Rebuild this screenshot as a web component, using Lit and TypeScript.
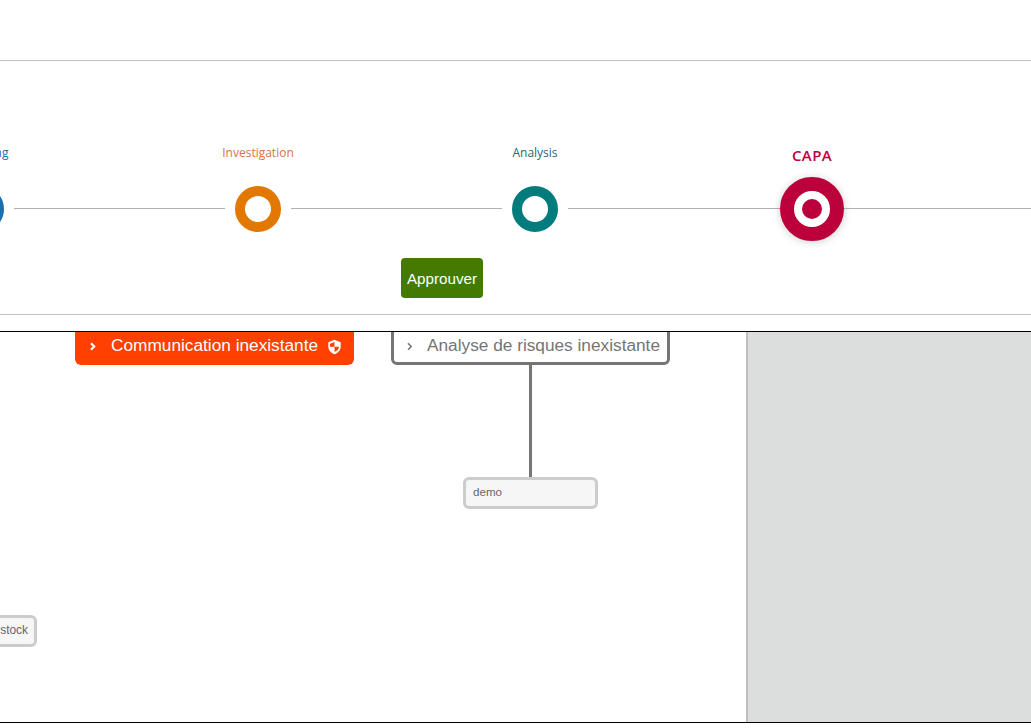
import { LitElement, html, css } from "lit";
import { customElement } from "lit/decorators.js";

@customElement("app-root")
export class AppRoot extends LitElement {
  static styles = css`
    :host { display: block; width: 1031px; height: 728px; overflow: hidden; background: #fff; font-family: "Liberation Sans", Arial, sans-serif; }
    .top { height: 60px; border-bottom: 1px solid #bdbdbd; }
    .process { height: 253px; border-bottom: 1px solid #c4c4c4; display: flex; flex-direction: column; }
    .labels { display: flex; margin: 76px 0 0 -157.5px; height: 32px; align-items: center; }
    .label { width: 277px; flex: none; text-align: center; font: 12px/16px "Open Sans", sans-serif; }
    .label.current { font-size: 15px; font-weight: 600; letter-spacing: .4px; position: relative; top: 2px; }
    .track { display: flex; align-items: center; height: 64px; margin: 8px 0 0 -52px; width: 1200px; }
    .line { height: 1px; background: #b0b0b0; width: 211px; flex: none; margin-top: -1px; }
    .line.tail { width: 300px; }
    .line.lead { width: 212px; }
    .dot { flex: none; box-sizing: border-box; width: 46px; height: 46px; border-radius: 50%; border: 10px solid; margin: 0 10px; background: #fff; }
    .dot.current { width: 64px; height: 64px; border-width: 14px; margin: 0; display: flex; align-items: center; justify-content: center; box-shadow: 0 1px 8px rgba(0,0,0,.2); }
    .dot.current i { width: 20px; height: 20px; border-radius: 50%; background: #bc003c; }
    .actions { display: flex; margin-top: 17px; padding-left: 401px; }
    .approve { box-sizing: border-box; width: 82px; height: 40px; border: 0; border-radius: 4px; background: #457a00; color: #fff; font: 15.2px "Liberation Sans", sans-serif; padding: 0; }
    .gap { height: 16px; border-bottom: 1px solid #000; }
    .work { display: flex; height: 390px; border-bottom: 1px solid #000; }
    .canvas { position: relative; width: 746px; overflow: hidden; }
    .side { flex: 1; background: #dcdddd; border-left: 2px solid #bfbfbf; }
    .node { position: absolute; box-sizing: border-box; display: flex; align-items: center; border-radius: 6px; white-space: nowrap; }
    .cause { top: -6px; height: 39px; width: 279px; font-size: 17.25px; }
    .red { left: 75px; background: #ff4000; color: #fff; padding-left: 14px; }
    .outline { left: 391px; background: #fff; color: #757575; border: 3px solid #757575; padding-left: 11px; }
    .chev { width: 9px; height: 9px; margin-right: 13px; flex: none; margin-top: 2px; fill: none; stroke: currentColor; stroke-width: 1.5; }
    .red .chev { stroke-width: 2.2; margin-left: -1px; margin-right: 14px; }
    .shield { width: 15px; height: 16px; margin-left: 9px; flex: none; margin-top: 2px; }
    .wire { position: absolute; left: 529px; top: 33px; width: 3px; height: 114px; background: #757575; }
    .leaf { background: #f6f6f6; border: 3px solid #ccc; color: #666; font-size: 11.6px; height: 32px; }
    .demo { left: 463px; top: 145px; width: 135px; padding-left: 7px; padding-bottom: 4px; }
    .stock { left: -100px; top: 283px; width: 137px; justify-content: flex-end; padding-right: 6px; padding-bottom: 3px; font-size: 11.9px; }
  `;

  private chevron() {
    return html`<svg class="chev" viewBox="0 0 9 9"><path d="M3 1.200 6.200 4.500 3 7.800"/></svg>`;
  }

  render() {
    const steps = [
      ["Screening", "#1b6fae", "#1b6fae"],
      ["Investigation", "#e0703c", "#e37800"],
      ["Analysis", "#1d6a75", "#007c7c"],
      ["CAPA", "#bc003c", "#bc003c"],
    ];
    return html`
      <div class="top"></div>
      <section class="process">
        <div class="labels">
          ${steps.map((s, i) => html`<div class="label ${i === 3 ? "current" : ""}" style="color:${s[1]}">${s[0]}</div>`)}
        </div>
        <div class="track">
          <div class="dot" style="border-color:${steps[0][2]}"></div>
          <div class="line"></div>
          <div class="dot" style="border-color:${steps[1][2]}"></div>
          <div class="line"></div>
          <div class="dot" style="border-color:${steps[2][2]}"></div>
          <div class="line lead"></div>
          <div class="dot current" style="border-color:${steps[3][2]}"><i></i></div>
          <div class="line tail"></div>
        </div>
        <div class="actions"><button class="approve">Approuver</button></div>
      </section>
      <div class="gap"></div>
      <section class="work">
        <div class="canvas">
          <div class="node cause red">${this.chevron()}<span>Communication inexistante</span>
            <svg class="shield" viewBox="0 0 15 16"><path fill-rule="evenodd" d="M7.500.800 1.300 3.200v4.200c0 3.600 2.600 6.600 6.200 7.800 3.600-1.200 6.200-4.200 6.200-7.800V3.200L7.500.800ZM7.500 3 3 4.700v3h4.500V3Zm0 4.700V13c2.500-1 4.500-3 4.500-5.300H7.500Z" fill="#fff"/></svg>
          </div>
          <div class="node cause outline">${this.chevron()}<span>Analyse de risques inexistante</span></div>
          <div class="wire"></div>
          <div class="node leaf demo">demo</div>
          <div class="node leaf stock">stock</div>
        </div>
        <aside class="side"></aside>
      </section>
    `;
  }
}
